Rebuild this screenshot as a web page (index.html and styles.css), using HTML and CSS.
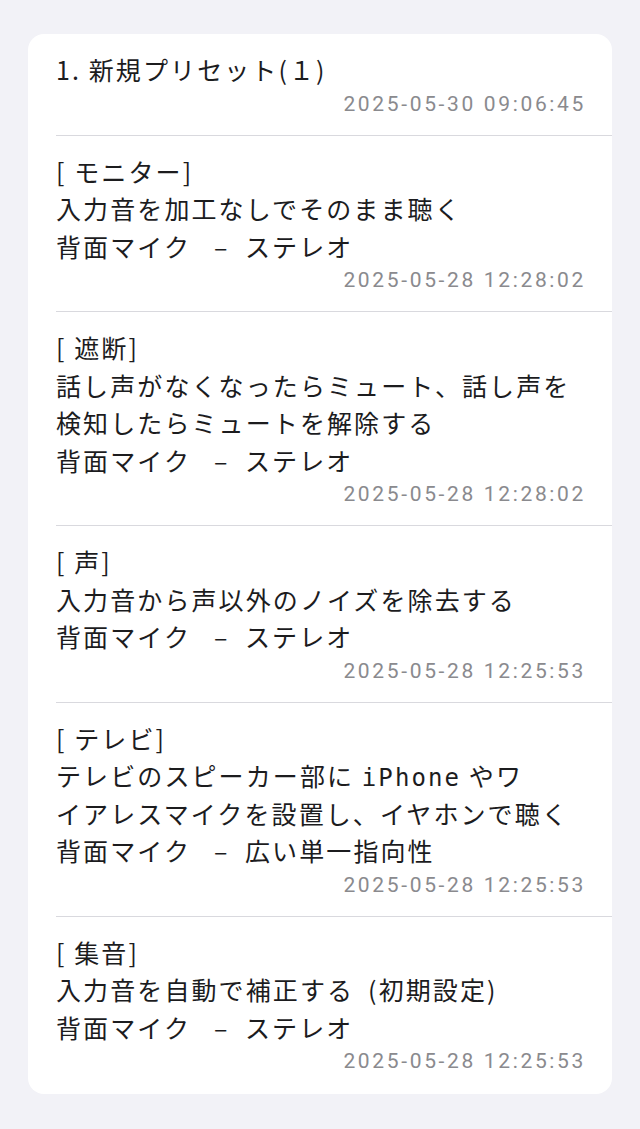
FILE: index.html
```html
<!DOCTYPE html>
<html lang="ja">
<head>
<meta charset="utf-8">
<link rel="stylesheet" href="styles.css">
</head>
<body>
<div class="page">
  <div class="card">
    <div class="item">
      <div class="line">1.&nbsp;新規プリセット(１)</div>
      <div class="date">2025-05-30 09:06:45</div>
    </div>
    <div class="item">
      <div class="line">[ モニター]</div>
      <div class="line">入力音を加工なしでそのまま聴く</div>
      <div class="line">背面マイク&nbsp;&nbsp;&nbsp;–&nbsp;&nbsp;ステレオ</div>
      <div class="date">2025-05-28 12:28:02</div>
    </div>
    <div class="item">
      <div class="line">[ 遮断]</div>
      <div class="line">話し声がなくなったらミュート、話し声を<br>検知したらミュートを解除する</div>
      <div class="line">背面マイク&nbsp;&nbsp;&nbsp;–&nbsp;&nbsp;ステレオ</div>
      <div class="date">2025-05-28 12:28:02</div>
    </div>
    <div class="item">
      <div class="line">[ 声]</div>
      <div class="line">入力音から声以外のノイズを除去する</div>
      <div class="line">背面マイク&nbsp;&nbsp;&nbsp;–&nbsp;&nbsp;ステレオ</div>
      <div class="date">2025-05-28 12:25:53</div>
    </div>
    <div class="item">
      <div class="line">[ テレビ]</div>
      <div class="line">テレビのスピーカー部に <span class="latin">iPhone</span> やワ<br>イアレスマイクを設置し、イヤホンで聴く</div>
      <div class="line">背面マイク&nbsp;&nbsp;&nbsp;–&nbsp;&nbsp;広い単一指向性</div>
      <div class="date">2025-05-28 12:25:53</div>
    </div>
    <div class="item">
      <div class="line">[ 集音]</div>
      <div class="line">入力音を自動で補正する<span class="gap">(初期設定)</span></div>
      <div class="line">背面マイク&nbsp;&nbsp;&nbsp;–&nbsp;&nbsp;ステレオ</div>
      <div class="date">2025-05-28 12:25:53</div>
    </div>
  </div>
</div>
</body>
</html>
```

FILE: styles.css
```css
html, body {
  margin: 0;
  padding: 0;
  background: #f2f2f7;
}

body {
  font-family: "Noto Sans CJK JP", "Noto Sans", sans-serif;
  color: #1c1c1e;
}

.page {
  padding: 34px 28px 36px 28px;
}

.card {
  background: #ffffff;
  border-radius: 16px;
  overflow: hidden;
}

.item {
  margin-left: 28px;
  padding: 17px 26px 18px 0;
  border-bottom: 1px solid #d9d9de;
}

.item:last-child {
  border-bottom: none;
  padding-bottom: 20px;
}

.line {
  font-size: 25px;
  line-height: 37.5px;
  letter-spacing: 2.1px;
  white-space: nowrap;
}

.latin {
  font-family: "DejaVu Sans Mono", monospace;
  font-size: 24px;
  line-height: 1;
}

.gap {
  margin-left: 14px;
}

.date {
  padding-top: 2px;
  text-align: right;
  font-family: Roboto, "Noto Sans", sans-serif;
  font-size: 21px;
  line-height: 26px;
  letter-spacing: 2.65px;
  color: #8a8a8e;
}
```
